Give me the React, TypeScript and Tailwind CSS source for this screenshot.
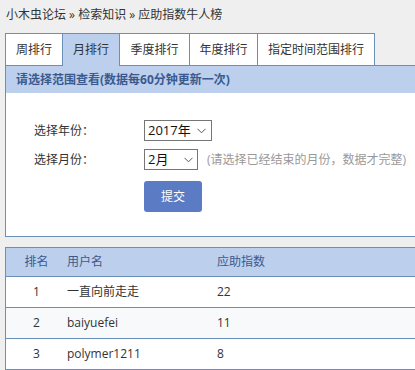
import React from "react";

const font = { fontFamily: '"Open Sans","Noto Sans CJK SC",sans-serif' };

function Chevron() {
  return (
    <svg width="9" height="6" viewBox="0 0 9 6" className="shrink-0">
      <path d="M0.5 0.8 L4.5 4.8 L8.5 0.8" fill="none" stroke="#555" strokeWidth="1" />
    </svg>
  );
}

function Select({ value, width, chevPad }: { value: string; width: string; chevPad: string }) {
  return (
    <div className={`${width} h-[21px] border border-[#767676] bg-white flex items-center justify-between pl-[3px] ${chevPad} text-[13px] text-[#111] leading-none`}>
      <span>{value}</span>
      <Chevron />
    </div>
  );
}

export default function App() {
  const tabs = [
    { t: "周排行", w: "w-[57px]" },
    { t: "月排行", w: "w-[57px]", active: true },
    { t: "季度排行", w: "w-[70px]" },
    { t: "年度排行", w: "w-[68px]" },
    { t: "指定时间范围排行", w: "w-[118px]", last: true },
  ];
  const rows = [
    { r: "1", n: "一直向前走走", s: "22" },
    { r: "2", n: "baiyuefei", s: "11" },
    { r: "3", n: "polymer1211", s: "8" },
  ];
  return (
    <div className="w-[415px] h-[370px] overflow-hidden bg-[#efefef] text-[12px] text-[#333]" style={font}>
      <div className="h-[33px] pl-[6px] pt-[6px] leading-[18px] text-[#333] whitespace-nowrap">
        小木虫论坛 » 检索知识 » 应助指数牛人榜
      </div>
      <div className="ml-[5px] w-[640px]">
        <div className="flex h-[33px]">
          {tabs.map((tab) => (
            <div
              key={tab.t}
              className={`${tab.w} shrink-0 flex items-center justify-center border-t border-l border-[#6a8fb9] ${tab.last ? "border-r" : ""} ${tab.active ? "bg-[#bccfec] text-[#333]" : "bg-white border-b text-[#333]"} whitespace-nowrap`}
            >
              {tab.t}
            </div>
          ))}
          <div className="flex-1 border-b border-[#6a8fb9]" />
        </div>
        <div className="border-l border-r border-b border-[#6a8fb9]">
          <div className="h-[27px] bg-[#bccfec] flex items-center pl-[10px] font-bold text-[#3a5a8f] whitespace-nowrap">
            请选择范围查看(数据每60分钟更新一次)
          </div>
          <div className="bg-white h-[143px] pt-[27px] pl-[28px]">
            <div className="flex items-center h-[21px]">
              <div className="w-[110px]">选择年份：</div>
              <Select value="2017年" width="w-[68px]" chevPad="pr-[5px]" />
            </div>
            <div className="flex items-center h-[21px] mt-[8px]">
              <div className="w-[110px]">选择月份：</div>
              <Select value="2月" width="w-[54px]" chevPad="pr-[4px]" />
              <span className="ml-[9px] text-[#999] whitespace-nowrap">(请选择已经结束的月份，数据才完整)</span>
            </div>
            <div className="mt-[11px] ml-[110px] w-[58px] h-[31px] rounded-[3px] bg-[#5b7cc4] text-white flex items-center justify-center">
              提交
            </div>
          </div>
        </div>
        <div className="mt-[10px] border-l border-r border-t border-[#6a8fb9]">
          <div className="flex h-[29px] items-center bg-[#bccfec] border-b border-[#6a8fb9] text-[#3a5a8f]">
            <div className="w-[61px] text-center">排名</div>
            <div className="w-[150px]">用户名</div>
            <div>应助指数</div>
          </div>
          {rows.map((row, i) => (
            <div
              key={row.r}
              className={`flex h-[31px] items-center border-b border-[#6a8fb9] ${i % 2 === 1 ? "bg-[#f8f9fb]" : "bg-white"}`}
            >
              <div className="w-[61px] text-center">{row.r}</div>
              <div className="w-[150px]">{row.n}</div>
              <div>{row.s}</div>
            </div>
          ))}
        </div>
      </div>
    </div>
  );
}
